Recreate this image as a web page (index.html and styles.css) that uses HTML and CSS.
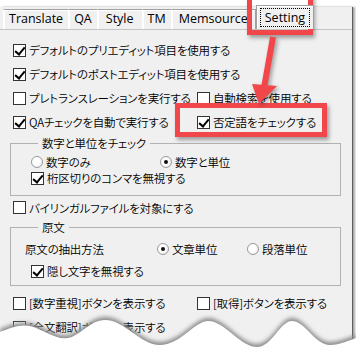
FILE: index.html
```html
<!DOCTYPE html>
<html lang="ja">
<head>
  <meta charset="UTF-8" />
  <title>Setting</title>
  <link rel="stylesheet" href="styles.css">
</head>
<body>

  <div class="shot">
    <div class="dialog">
      <div class="tabs">
        <div class="tab t-translate">Translate</div>
        <div class="tab t-qa">QA</div>
        <div class="tab t-style">Style</div>
        <div class="tab t-tm">TM</div>
        <div class="tab t-mem">Memsource</div>
        <div class="tab active"><span class="focus">Setting</span></div>
      </div>

      <div class="panel">
        <div class="row"><label class="chk"><span class="box on"></span>デフォルトのプリエディット項目を使用する</label></div>
        <div class="row"><label class="chk"><span class="box on"></span>デフォルトのポストエディット項目を使用する</label></div>
        <div class="row"><label class="chk col"><span class="box"></span>プレトランスレーションを実行する</label><label class="chk"><span class="box"></span>自動検索を使用する</label></div>
        <div class="row"><label class="chk col"><span class="box on"></span>QAチェックを自動で実行する</label><label class="chk"><span class="box on"></span>否定語をチェックする</label></div>

        <fieldset class="group g-num">
          <legend>数字と単位をチェック</legend>
          <div class="grow"><label class="rad opt-a"><span class="dot"></span>数字のみ</label><label class="rad"><span class="dot on"></span>数字と単位</label></div>
          <div class="grow"><label class="chk"><span class="box on"></span>桁区切りのコンマを無視する</label></div>
        </fieldset>

        <div class="row short"><label class="chk"><span class="box"></span>バイリンガルファイルを対象にする</label></div>

        <fieldset class="group g-src">
          <legend>原文</legend>
          <div class="grow tall"><span class="caption">原文の抽出方法</span><label class="rad opt-b"><span class="dot on"></span>文章単位</label><label class="rad"><span class="dot"></span>段落単位</label></div>
          <div class="grow tall"><label class="chk"><span class="box on"></span>隠し文字を無視する</label></div>
        </fieldset>

        <div class="row gap"><label class="chk col"><span class="box"></span>[数字重視]ボタンを表示する</label><label class="chk"><span class="box"></span>[取得]ボタンを表示する</label></div>
        <div class="row"><label class="chk col"><span class="box"></span>[全文翻訳]ボタンを表示する</label></div>
      </div>
    </div>

    <!-- callouts -->
    <div class="mark mark-tab"></div>
    <div class="mark mark-neg"></div>
    <svg class="arrow" width="40" height="76" viewBox="0 0 40 76">
      <line x1="28" y1="3" x2="19" y2="54" stroke="#f2474a" stroke-width="6" />
      <polygon points="7,50 32,52 14,70" fill="#f2474a" />
    </svg>

    <!-- torn bottom edge -->
    <svg class="tear" width="356" height="40" viewBox="0 0 356 40">
      <defs>
        <filter id="soft" x="-10%" y="-50%" width="120%" height="200%">
          <feGaussianBlur stdDeviation="2" />
        </filter>
      </defs>
      <path class="tear-shade" filter="url(#soft)" d="M0 40 L0 19 C10 15 20 11 30 13 C45 17 55 27 68 25 C80 23 90 7 105 7 C125 7 140 32 160 32 C180 32 195 8 208 8 C225 8 240 34 257 34 C272 34 280 8 292 8 C305 8 315 32 330 32 C340 32 350 27 356 25 L356 40 Z" />
      <path class="tear-paper" d="M0 40 L0 22 C10 18 20 14 30 16 C45 20 55 30 68 28 C80 26 90 10 105 10 C125 10 140 35 160 35 C180 35 195 11 208 11 C225 11 240 37 257 37 C272 37 280 11 292 11 C305 11 315 35 330 35 C340 35 350 30 356 28 L356 40 Z" />
    </svg>
  </div>

</body>
</html>
```

FILE: styles.css
```css
* { margin: 0; padding: 0; box-sizing: border-box; }

body {
  font-family: "Noto Sans CJK JP", "Noto Sans", sans-serif;
  font-size: 11.5px;
  font-weight: 350;
  letter-spacing: -0.2px;
  font-feature-settings: "palt";
  color: #000;
  background: #fff;
}

.shot {
  position: relative;
  width: 356px;
  height: 350px;
  padding-top: 7px;
  overflow: hidden;
  background: #fff;
}

.dialog {
  width: 353px;
  height: 343px;
  background: #f0f0f0;
  border-right: 1px solid #5e5e5e;
  box-shadow: 2px 0 2px rgba(0, 0, 0, 0.35);
}

/* Tabs */
.tabs {
  display: flex;
  align-items: flex-end;
  height: 22px;
  padding-left: 3px;
}

.tab {
  height: 20px;
  padding: 0 5px;
  font-family: "Open Sans", "Noto Sans", sans-serif;
  font-size: 12.5px;
  font-weight: 400;
  letter-spacing: 0;
  line-height: 18px;
  background: #f0f0f0;
  border: 1px solid #a0a0a0;
  border-bottom: none;
  border-left-color: #fff;
  box-shadow: inset 1px 1px 0 #fff;
  margin-right: -1px;
}

.t-style { padding: 0 8px; }
.t-mem { padding: 0 7px; }

.tab.active {
  position: relative;
  height: 24px;
  padding: 2px 3px 0;
  margin-left: 1px;
  border-left-color: #a0a0a0;
  z-index: 1;
}

.focus {
  display: block;
  padding: 0 4px;
  height: 19px;
  line-height: 17px;
  border: 1px dotted #000;
}

/* Panel */
.panel {
  border-top: 1px solid #c4c4c4;
  padding-top: 8px;
}

.row {
  display: flex;
  align-items: center;
  height: 24px;
  padding-left: 13px;
  white-space: nowrap;
}

.row.short { height: 23px; }
.row.gap { margin-top: 5px; }

.col { width: 184px; }

.chk, .rad {
  display: flex;
  align-items: center;
  white-space: nowrap;
}

.box {
  position: relative;
  width: 13px;
  height: 13px;
  margin-right: 3px;
  background: #fff;
  border: 1px solid #333;
  flex: none;
}

.box.on::after {
  content: "";
  position: absolute;
  left: 3px;
  top: 0px;
  width: 4px;
  height: 8px;
  border: solid #000;
  border-width: 0 2px 2px 0;
  transform: rotate(40deg);
}

.dot {
  position: relative;
  width: 12px;
  height: 12px;
  margin-right: 3px;
  border-radius: 50%;
  border: 1px solid #9a9a9a;
  background: radial-gradient(circle at 40% 40%, #fff 40%, #e2e2e2 100%);
  flex: none;
}

.dot.on::after {
  content: "";
  position: absolute;
  left: 3px;
  top: 3px;
  width: 4px;
  height: 4px;
  border-radius: 50%;
  background: #111;
}

/* Group boxes */
.group {
  margin: 0 11px 0 10px;
  border: 1px solid #b2b2b2;
  padding: 3px 0 9px 20px;
}

.group legend {
  margin-left: 7px;
  padding: 0 4px;
  line-height: 16px;
}

.g-num { margin-top: 1px; }
.g-src { padding-bottom: 3px; }

.grow {
  display: flex;
  align-items: center;
  height: 16px;
  white-space: nowrap;
}

.grow.tall { height: 22px; }

.opt-a { width: 129px; }
.opt-b { width: 90px; }

.caption {
  width: 132px;
  margin-left: -6px;
}

/* Callouts */
.mark {
  position: absolute;
  border: 5px solid #f2474a;
  box-shadow: 2px 3px 4px rgba(0, 0, 0, 0.35);
}

.mark-tab { left: 247px; top: -6px; width: 66px; height: 41px; }
.mark-neg { left: 175px; top: 103px; width: 152px; height: 34px; }

.arrow {
  position: absolute;
  left: 245px;
  top: 34px;
  filter: drop-shadow(2px 2px 2px rgba(0, 0, 0, 0.35));
}

.tear {
  position: absolute;
  left: 0;
  bottom: 0;
}

.tear-shade { fill: #8c8c8c; }
.tear-paper { fill: #fff; }
```
